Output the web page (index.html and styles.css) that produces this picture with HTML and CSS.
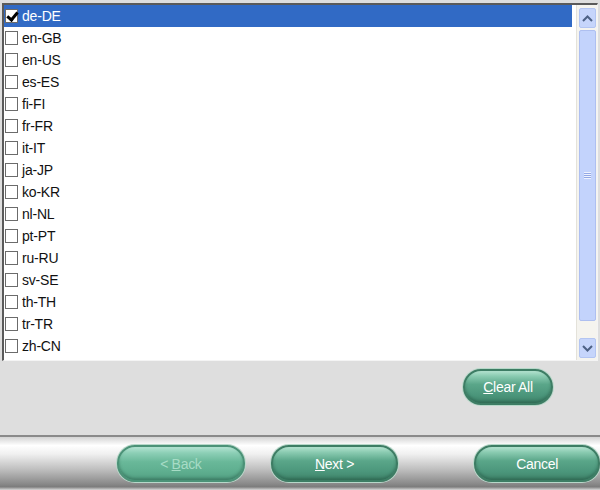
FILE: index.html
```html
<!DOCTYPE html>
<html>
<head>
    <title>Select Languages</title>
    <link rel="stylesheet" href="styles.css">
</head>
<body>
    <div class="page">
        <div class="listbox">
            <ul class="items">
                <li class="item selected"><span class="check checked"></span>de-DE</li>
                <li class="item"><span class="check"></span>en-GB</li>
                <li class="item"><span class="check"></span>en-US</li>
                <li class="item"><span class="check"></span>es-ES</li>
                <li class="item"><span class="check"></span>fi-FI</li>
                <li class="item"><span class="check"></span>fr-FR</li>
                <li class="item"><span class="check"></span>it-IT</li>
                <li class="item"><span class="check"></span>ja-JP</li>
                <li class="item"><span class="check"></span>ko-KR</li>
                <li class="item"><span class="check"></span>nl-NL</li>
                <li class="item"><span class="check"></span>pt-PT</li>
                <li class="item"><span class="check"></span>ru-RU</li>
                <li class="item"><span class="check"></span>sv-SE</li>
                <li class="item"><span class="check"></span>th-TH</li>
                <li class="item"><span class="check"></span>tr-TR</li>
                <li class="item"><span class="check"></span>zh-CN</li>
            </ul>
            <div class="scrollbar">
                <div class="scroll-btn">
                    <svg width="11" height="7" viewBox="0 0 11 7"><path d="M1 6 L5.5 1.5 L10 6" fill="none" stroke="#4d6185" stroke-width="2"/></svg>
                </div>
                <div class="thumb">
                    <span class="grip"></span>
                </div>
                <div class="track"></div>
                <div class="scroll-btn">
                    <svg width="11" height="7" viewBox="0 0 11 7"><path d="M1 1 L5.5 5.5 L10 1" fill="none" stroke="#4d6185" stroke-width="2"/></svg>
                </div>
            </div>
        </div>

        <div class="clear-row">
            <button type="button" class="pill clear"><u>C</u>lear All</button>
        </div>

        <div class="nav">
            <button type="button" class="pill back" disabled>&lt; <u>B</u>ack</button>
            <button type="button" class="pill next"><u>N</u>ext &gt;</button>
            <button type="button" class="pill cancel">Cancel</button>
        </div>
    </div>
</body>
</html>
```

FILE: styles.css
```css
body {
    margin: 0;
    font-family: "Liberation Sans", Arial, sans-serif;
}

.page {
    width: 600px;
    height: 490px;
    background-color: #dedede;
    display: flex;
    flex-direction: column;
    padding-top: 3px;
    box-sizing: border-box;
    overflow: hidden;
}

.listbox {
    display: flex;
    margin: 0 2px;
    height: 358px;
    background-color: #fff;
    border-top: 2px solid #5a5a5a;
    border-left: 2px solid #5a5a5a;
    border-right: 1px solid #f4f4f4;
    border-bottom: 1px solid #f4f4f4;
    box-sizing: border-box;
}

.items {
    list-style: none;
    margin: 0;
    padding: 0;
    flex: 1;
}

.item {
    display: flex;
    align-items: center;
    height: 22px;
    padding-left: 1px;
    margin-right: 4px;
    font-size: 14px;
    letter-spacing: -0.2px;
    color: #111;
}

.item.selected {
    background-color: #316ac5;
    color: #fff;
}

.check {
    width: 11px;
    height: 12px;
    border: 1px solid #6b6b6b;
    background-color: #fff;
    margin-right: 4px;
    box-sizing: content-box;
    position: relative;
}

.check.checked::after {
    content: "";
    position: absolute;
    left: 3px;
    top: 0px;
    width: 4px;
    height: 8px;
    border-right: 3px solid #000;
    border-bottom: 3px solid #000;
    transform: rotate(40deg);
}

.scrollbar {
    width: 21px;
    display: flex;
    flex-direction: column;
    align-items: center;
    padding: 3px 0 2px;
    background-color: #f5f4ef;
    border-left: 1px solid #e4e2da;
    box-sizing: border-box;
}

.scroll-btn {
    width: 17px;
    height: 20px;
    background-color: #c6d5fb;
    border: 1px solid #b3c5f2;
    border-radius: 2px;
    box-sizing: border-box;
    display: flex;
    align-items: center;
    justify-content: center;
}

.thumb {
    width: 17px;
    height: 291px;
    margin-top: 2px;
    background-color: #c3d3fc;
    border: 1px solid #aebff0;
    border-radius: 2px;
    box-sizing: border-box;
    display: flex;
    align-items: center;
    justify-content: center;
}

.grip {
    width: 7px;
    height: 7px;
    background: repeating-linear-gradient(#eef2fe 0, #eef2fe 1px, #93a8e6 1px, #93a8e6 2px);
}

.track {
    flex: 1;
}

.clear-row {
    display: flex;
    justify-content: flex-end;
    padding: 8px 47px 0 0;
    height: 76px;
    box-sizing: border-box;
    border-bottom: 2px solid #8a8a8a;
}

.pill {
    height: 36px;
    border-radius: 18px;
    border: 2px solid #3d7d64;
    background: linear-gradient(#b3e2cf 0%, #8acbb1 16%, #5aa689 42%, #4b967b 75%, #3f8369 100%);
    box-shadow: 0 0 0 1px #b7d8c9, inset 0 -2px 3px rgba(20, 60, 45, 0.35);
    color: #fff;
    font-family: "Liberation Sans", Arial, sans-serif;
    font-size: 14px;
    letter-spacing: -0.3px;
    padding: 0;
    cursor: pointer;
}

.pill.clear {
    width: 90px;
}

.nav {
    flex: 1;
    display: flex;
    align-items: flex-start;
    padding: 8px 0 0 117px;
    background: linear-gradient(#d4d4d4 0%, #ffffff 16%, #f0f0f0 32%, #bdbdbd 62%, #8a8a8a 88%, #7c7c7c 94%, #d8d8d8 100%);
}

.nav .pill {
    width: 128px;
    height: 37px;
}

.pill.back {
    background: linear-gradient(#b4e3d2 0%, #8ccfb6 18%, #69b899 45%, #5eae8f 75%, #529f82 100%);
    border-color: #4b9277;
    color: #a7dcc6;
    cursor: default;
}

.pill.next {
    margin-left: 26px;
}

.pill.cancel {
    margin-left: 76px;
    width: 126px;
}
```
